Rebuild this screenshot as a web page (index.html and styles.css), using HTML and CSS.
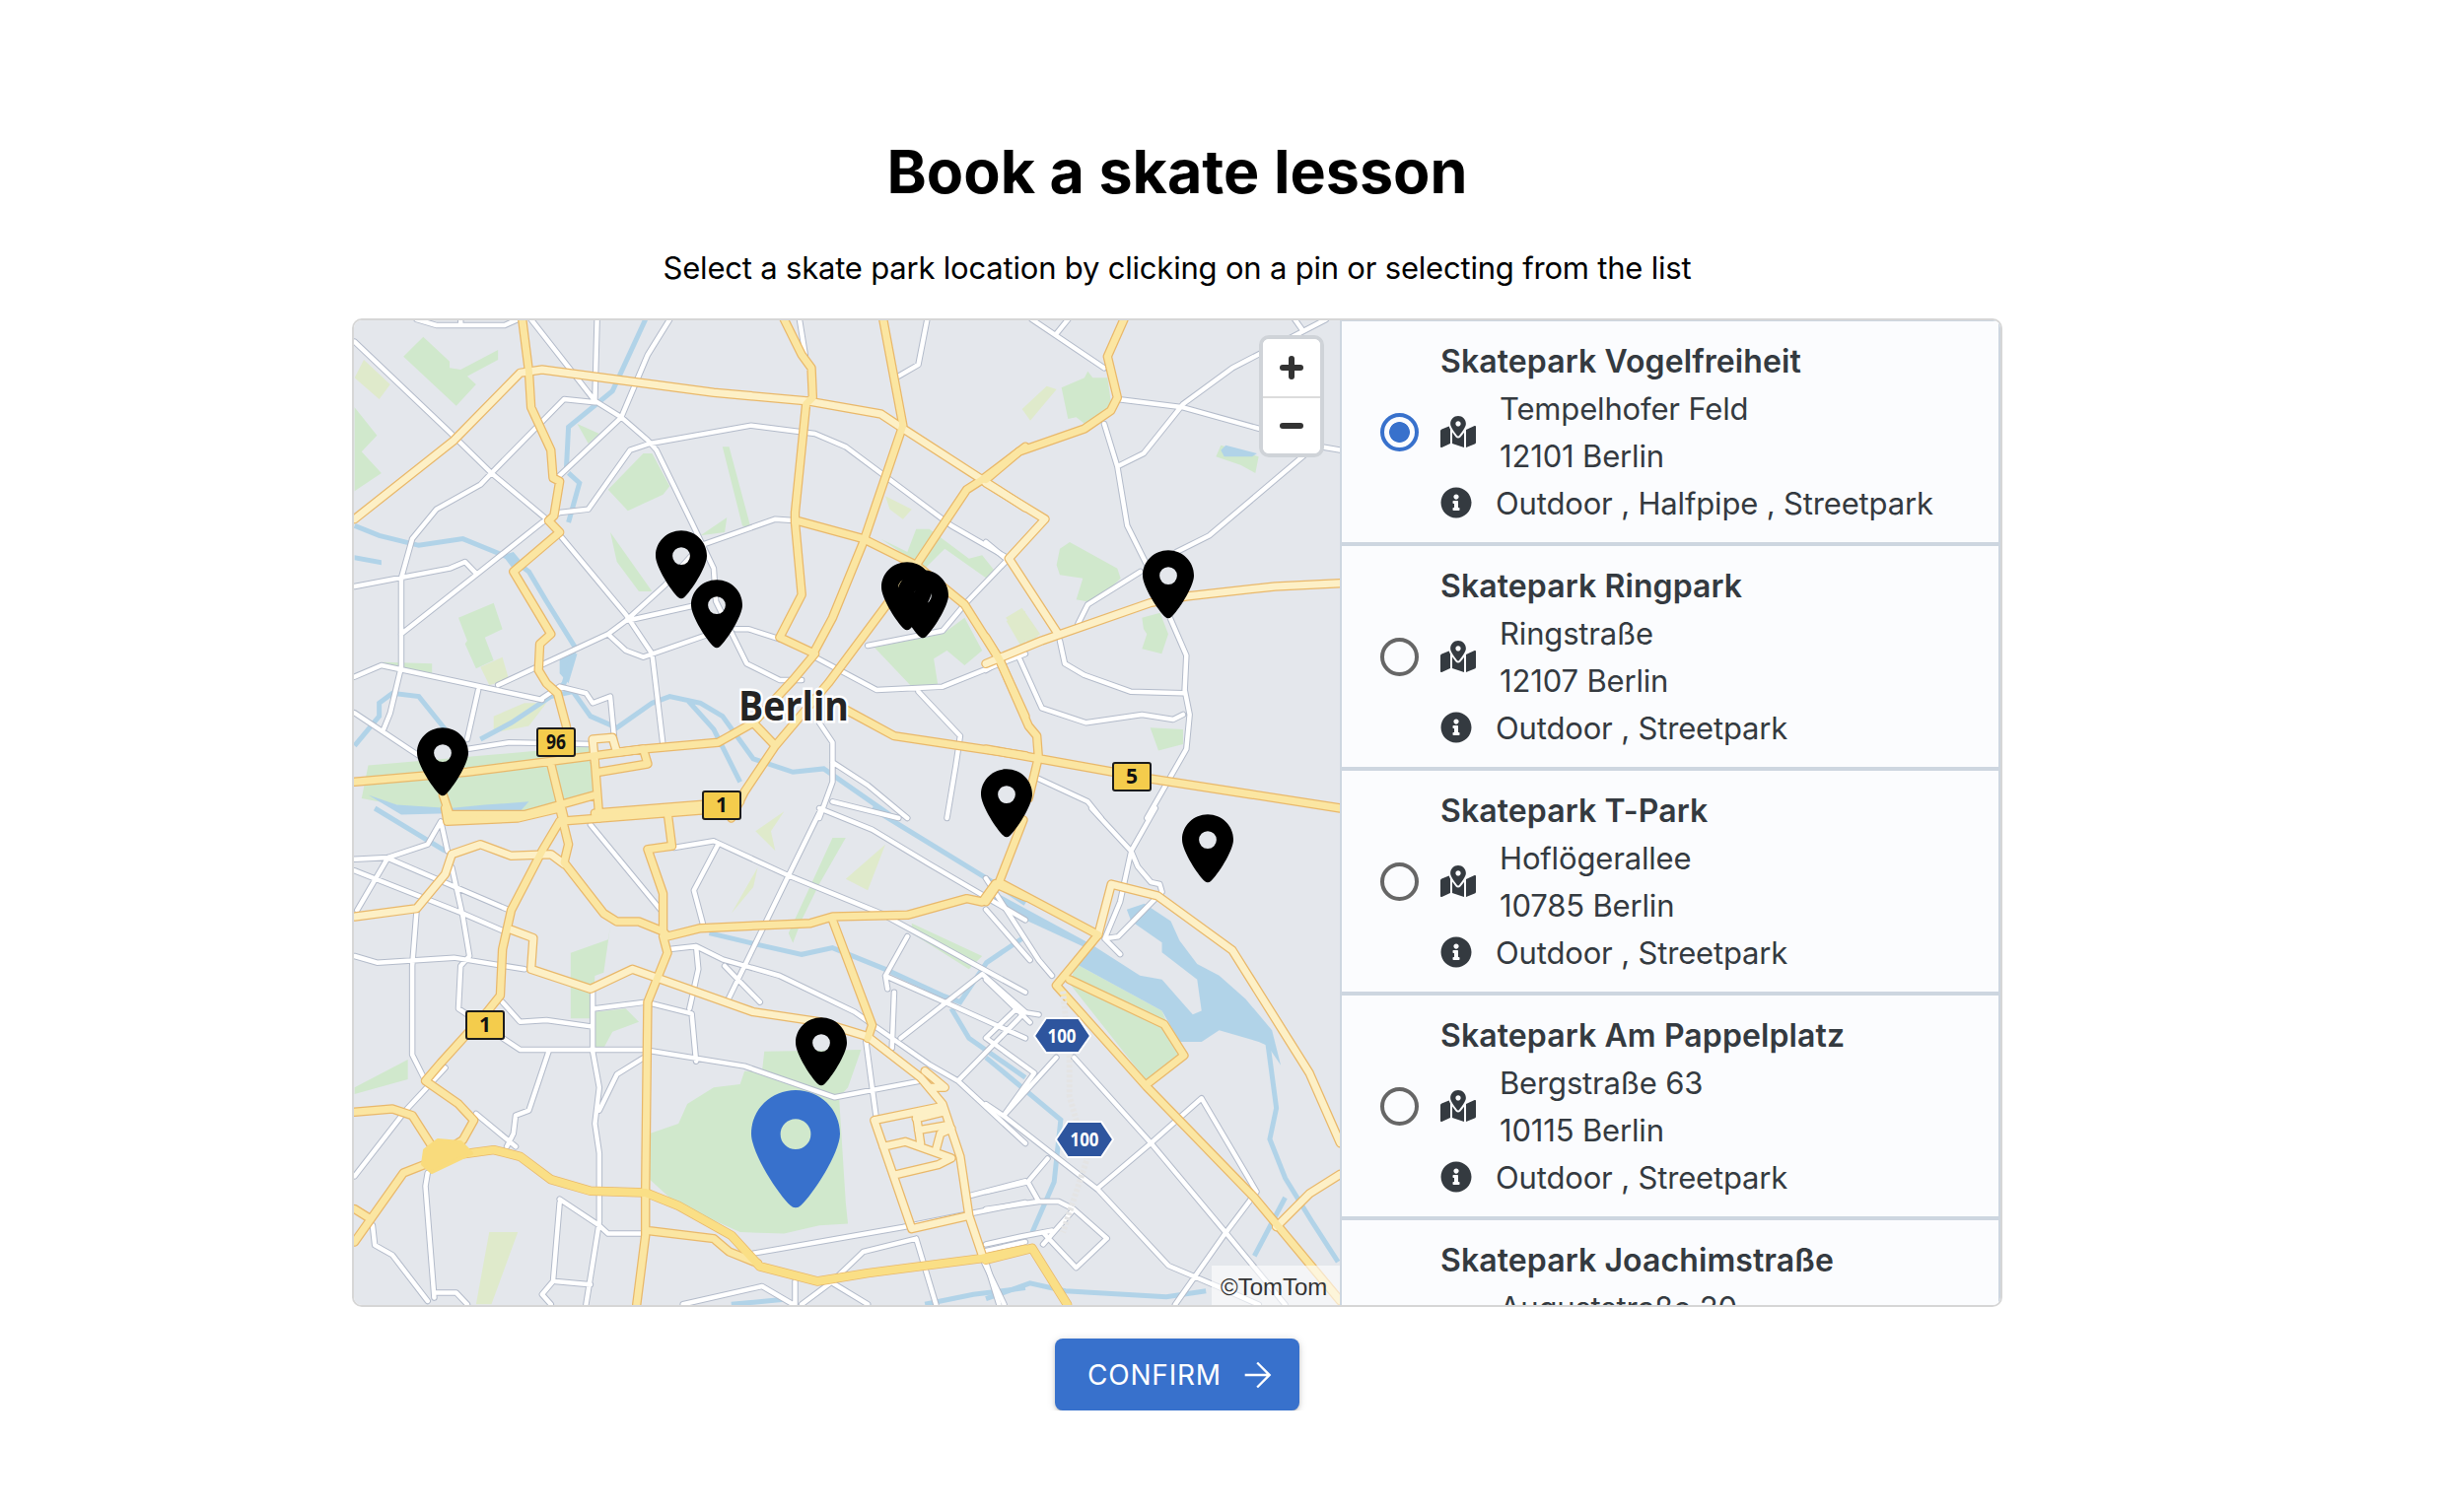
FILE: index.html
```html
<!DOCTYPE html>
<html lang="en">
<head>
  <meta charset="UTF-8">
  <title>Book a skate lesson</title>
  <meta name="viewport" content="width=device-width, initial-scale=1.0">
  <link rel="stylesheet" href="styles.css">
</head>
<body>
<main class="page">
  <h1>Book a skate lesson</h1>
  <p class="intro">Select a skate park location by clicking on a pin or selecting from the list</p>

  <section class="picker">
    <div class="map">
      <svg class="map-canvas" viewBox="0 0 1000 999" width="1000" height="999">
        <defs>
          <symbol id="pin" viewBox="0 0 24 32">
            <path fill-rule="evenodd" d="M12 0C5.4 0 0 5.2 0 11.8 0 17 7.5 28.5 10.6 31.2a1.9 1.9 0 0 0 2.8 0C16.5 28.5 24 17 24 11.8 24 5.2 18.6 0 12 0ZM12 7.8a4.1 4.1 0 1 0 0 8.2 4.1 4.1 0 0 0 0-8.2Z"/>
          </symbol>

          <g id="minor-roads">
            <g transform="translate(-19 -15) scale(.4464 .3333)">
              <path d="M44 110L260 385 355 510 480 650 660 940 720 1060 745 1340M185 42L230 60 385 60 415 42M285 42V55M445 42L590 290 650 340 710 410 730 440 810 660 860 800 865 900 935 1090 1010 1140 1060 1140M595 42L590 290M760 42L710 150 650 340 500 530M1055 42L1068 150M1345 42L1325 180 1280 215M355 510L520 285 590 295M44 855L260 800 295 780 320 815M150 1000L320 820 470 660 510 630 575 620 670 440 715 420 945 365 1090 390 1160 430 1260 530 1400 670 1530 770 1430 910 1380 990 1210 1035M175 710L230 620 330 545 355 510M175 710L150 830V1100L125 1240 110 1290M44 1130L105 1095 470 1200M44 1240L190 1370M325 1170L300 1320M370 1155L620 1000 660 960 750 850 830 730 1000 650 1050 655M620 1000L660 1050 700 1070 850 1000M660 960L810 915M910 985H940L1010 1015M1090 1070L1230 1170 1380 1160 1510 1090 1568 1060M1325 1175L1420 1310 1410 1400 1390 1560M1100 1270L1130 1330V1450L1100 1560M1130 1390L1210 1460 1300 1560M1130 1510L1280 1560M470 1195L510 1160 570 1180 585 1210 625 1190 635 1330M300 1350L395 1330 580 1335M1530 770L1568 720"/>
            </g>
            <g transform="translate(-19 495) scale(.4464 .3333)">
              <path d="M44 155L120 150 210 110 240 40 255 130M120 150L50 310M125 155L395 310M44 190L290 320 385 375M265 180L290 330 305 450 285 480 280 610 420 735H700L930 785 1135 880 1330 830M185 310L175 480V750L205 830M44 450L95 470 270 455 430 490M380 590L420 650 480 645 585 665M585 550V740L600 850 590 960 600 1050V1260M590 610L705 590 810 625 820 770M860 100L770 120M860 100L1030 205 1240 320 1350 400 1568 560M1105 0L1030 205 890 590M580 50L740 310M870 110L815 250 835 350M820 420L880 460 1010 510 1180 620 1350 780 1415 830 1568 1020M755 430L820 420 825 490 805 610M885 480L965 590M1100 0L1220 65 1350 170 1568 340M1300 390L1250 510 1255 550M1250 510L1410 605 1568 700M1470 505L1568 620M1285 700L1470 505M1415 830L1568 620M1270 560L1265 730M1205 700L1230 950M700 760L640 810 600 920M485 740L440 920 410 935 405 990 390 1030M320 930L410 1030M44 1120L160 920 250 790M210 1110L205 1150 225 1490M510 1200L495 1440 470 1480 490 1510M500 1440L580 1450M600 1260L570 1510M510 1190L600 1270 620 1295H700M85 1270L90 1330 130 1360 210 1500M225 1475H275L300 1510M950 1355L1290 1275 1568 1200M1440 1180L1568 1135M1320 1310L1200 1350 1130 1440 1060 1510M1320 1310L1365 1510M790 1510L970 1455 1040 1510M1045 1440V1510M1130 1445L1210 1510M1470 1350L1568 1320M1470 1370L1520 1510"/>
            </g>
            <g transform="translate(641 -15) scale(.3333)">
              <path d="M140 42L360 190M250 42L215 85M940 42L960 70M1035 42L750 190 600 300 480 450 400 490M400 285L600 310 850 380M1020 430L1078 440M360 360L400 490 430 670 490 790M0 720L60 770M975 450L680 700 580 750M470 810L310 910 280 970M560 950L610 1065 605 1170 620 1245 610 1350 490 1560M225 1020L240 1090 300 1125 440 1175 600 1180M100 1070L170 1225 305 1270 475 1245 570 1260 600 1245M0 1110L40 1085M160 1440L310 1510 350 1560"/>
            </g>
            <g transform="translate(641 495) scale(.4464 .395)">
              <path d="M240 0L330 110 345 150 375 190 395 195 400 215 300 330 270 335 305 375M385 0L330 110 305 240 270 335M0 180L120 390 150 430M0 260L100 390M0 440L100 550M65 520L0 590M0 590L110 680 40 790M120 530L65 520M200 640L375 860 545 1090 680 1275M0 760L40 790 255 980 415 1175 530 1230 620 1275M40 790L160 640M375 860L490 745 615 985 545 1090 430 1275M255 975L375 860M140 900L95 960 0 985M95 960L120 1010 0 1030M120 1010H165L200 1030M200 1030L130 1120M200 1030L275 1105 205 1180 130 1090M0 1120L80 1100 150 1085M0 1165L30 1275"/>
            </g>
          </g>

          <g id="light-roads">
            <g transform="translate(-19 -15) scale(.4464 .3333)">
              <path d="M44 650L270 410 420 205 470 195 860 265 1070 290 1240 330 1285 370 1470 530 1568 615M640 1360L630 1315 585 1320 590 1390M700 1350L640 1360"/>
            </g>
            <g transform="translate(-19 495) scale(.4464 .3333)">
              <path d="M45 330L185 305 250 200 265 140 330 110 400 145 490 140 520 170M400 370L450 395 445 490 580 550 675 490 950 620 1100 650 1210 695 1330 820 1380 900 1420 1060 1440 1240 1470 1360M1340 800L1385 850 1350 850 1330 820M1225 950L1370 910M1225 950L1310 1280 1440 1240M1245 1030L1295 1015 1400 1065 1370 1085 1275 1115M1320 930L1330 1020M1325 980L1390 965M1320 945L1380 925M1365 1040L1375 990 1400 975"/>
            </g>
            <g transform="translate(641 -15) scale(.3333)">
              <path d="M1078 845L880 855 610 885 500 905 170 1020 0 1090M0 540L180 650 70 770 220 1000"/>
            </g>
            <g transform="translate(641 495) scale(.4464 .395)">
              <path d="M285 195L255 325M285 195L390 225 560 365 735 680 805 860M660 1075L735 990 805 940"/>
            </g>
          </g>

          <g id="main-roads">
            <g transform="translate(-19 -15) scale(.4464 .3333)">
              <path d="M425 42L440 200 445 310 490 440 495 525 510 535 497 640 485 655 510 690 405 810 490 1000 465 1030 462 1110 480 1150 505 1180 525 1280 530 1330M1020 42L1060 150 1082 190 1085 280 1070 300 1045 630V660L1060 880 1010 1010 1090 1060 1040 1140M1245 42L1290 365 1200 720 1130 950 1090 1050M1050 655L1200 710 1320 790 1430 910 1510 1080 1568 1250M1568 430L1470 530 1435 560 1320 790 1120 1150 1000 1340 930 1480 900 1560M1160 1230L1270 1310 1568 1370M1040 1140L950 1270 870 1330 700 1350 710 1395 600 1420M700 1350L590 1370 300 1420 44 1450M950 1270L1000 1340M590 1390L600 1560M490 1395L520 1560M590 1490L430 1550 260 1550 245 1490M590 1545L920 1510"/>
            </g>
            <g transform="translate(-19 495) scale(.4464 .3333)">
              <path d="M250 0L255 40 415 30 510 0M510 40L840 5M510 0L530 110 520 165 610 320 640 345H690L745 375 755 390 830 365 1080 350 1130 330 1300 325 1435 275 1470 285 1500 230 1568 270M755 10L765 115 710 125 745 260V375M510 40L470 130 400 310 380 430 375 570 345 620 240 775 205 830 280 900 315 950 290 1010 230 1060M1130 340L1220 660 1210 700M745 390L755 440 710 590 705 1160V1300L685 1510M44 925L130 915 175 935 225 1040 250 1060M250 1060L155 1110 44 1320M44 1220L80 1250M705 1285L860 1310 895 1350 960 1385"/>
            </g>
            <g transform="translate(641 -15) scale(.3333)">
              <path d="M420 42L370 155 400 280 380 320 300 375 100 445 0 530M1078 1530L500 1440 0 1350M0 1010L40 1075 130 1280 155 1310 160 1375 130 1500"/>
            </g>
            <g transform="translate(641 495) scale(.4464 .395)">
              <path d="M85 30L30 190 0 240M30 190L255 325 160 455 365 715 610 1000 805 1265M190 440L405 555 450 635 370 705"/>
            </g>
          </g>

          <g id="ring-road">
            <g transform="translate(-19 495) scale(.4464 .3333)">
              <path d="M250 1060L360 1040 420 1060 490 1130 580 1165 705 1170 780 1210 900 1300 965 1395 1095 1440 1210 1415 1470 1370 1568 1342"/>
            </g>
            <g transform="translate(641 495) scale(.4464 .395)">
              <path d="M0 1160L105 1130 185 1275"/>
            </g>
          </g>
        </defs>

        <g class="park">
          <g transform="translate(-19 -15) scale(.4464 .3333)">
            <path d="M155 155L200 95 260 170V190L285 195 370 135V165L300 215 320 240 275 305ZM44 310L95 395 60 445 105 510 44 565ZM620 560L700 450H720L760 550 745 575 665 625ZM625 690L720 870H690L640 780ZM880 430H895L945 680 925 670ZM830 700L890 645 885 690ZM550 360L600 390 575 420ZM280 950L360 905 380 985 340 1010 360 1080 320 1105 295 1030 300 1020ZM1225 1040L1380 1000 1430 950 1470 1050 1430 1095 1390 1050 1360 1075 1370 1160H1310ZM1240 710L1300 750 1320 680H1350L1440 770 1470 760 1500 810 1480 830 1385 740 1340 800ZM75 1400L590 1340V1500L430 1550H260L60 1500ZM110 1085L220 1090V1125L110 1095Z"/>
          </g>
          <g transform="translate(-19 495) scale(.4464 .3333)">
            <path d="M715 990L780 960 800 900 860 850 920 840 930 800H970L975 740 1195 735 1165 850 1145 880 1150 990 1160 1200 1165 1265 1100 1270 1020 1295 920 1290 870 1260 780 1210 715 1130ZM535 440L620 400 625 360 610 500 590 510 585 640H535ZM590 620L660 610 690 650 630 680 610 730H590ZM44 850L165 765V825L44 870ZM1130 90H1160L1100 230 1060 340 1040 410 1030 380ZM1310 350L1470 450 1440 490 1310 380Z"/>
          </g>
          <g transform="translate(641 -15) scale(.3333)">
            <path d="M230 250L300 220 310 200 325 220H370L380 290 370 320 300 360 275 340 250 345ZM700 460L715 425 830 460 820 510 775 485ZM215 790L225 740 255 720 400 800 410 830 330 905 275 895 295 830 225 820ZM475 950L530 935 555 1000 535 1060 475 1045 490 1000 480 985ZM500 1285L600 1290V1335L525 1355Z"/>
          </g>
          <g transform="translate(641 495) scale(.4464 .395)">
            <path d="M190 450L205 400 400 520 440 630 365 700Z"/>
          </g>
        </g>
        <g class="park-light">
          <g transform="translate(-19 -15) scale(.4464 .3333)">
            <path d="M44 220L65 165 125 240 100 285ZM330 1100L380 1070 395 1140 350 1155ZM360 1250L430 1210 480 1210 440 1280 360 1300ZM1250 580L1310 620 1290 650 1260 620ZM1525 960L1568 930V1060Z"/>
          </g>
          <g transform="translate(-19 495) scale(.4464 .3333)">
            <path d="M320 1510L350 1290H415L355 1510ZM955 70L1020 10 990 70 1000 130ZM900 320L960 180 950 240ZM1160 215L1250 110 1210 250Z"/>
          </g>
          <g transform="translate(641 -15) scale(.3333)">
            <path d="M110 315L185 245 215 255 135 350ZM60 950L110 920 165 1000 130 1030Z"/>
          </g>
        </g>
        <g class="water">
          <g transform="translate(-19 -15) scale(.4464 .3333)">
            <path d="M510 1060H550L530 1150 510 1120ZM380 760L405 750 430 790 400 795ZM44 760L105 775V790L44 775ZM75 1490L140 1520 260 1530 340 1520 440 1510 420 1540 150 1550Z"/>
          </g>
          <g transform="translate(641 -15) scale(.3333)">
            <path d="M715 440L730 425 825 450 810 460 725 460Z"/>
          </g>
          <g transform="translate(641 495) scale(.4464 .395)">
            <path d="M0 215H20L240 350 350 430 400 440 470 530 490 520 480 440 400 370V345L330 290 320 260 360 245 420 290 440 340 480 400 530 430 590 490 650 570 670 660 640 610 620 600 530 570 490 600H440L400 520 205 400 240 365 0 240Z"/>
          </g>
        </g>
        <g class="river">
          <g transform="translate(-19 -15) scale(.4464 .3333)">
            <path d="M44 670L100 700 190 730 290 710 400 770 440 810 480 900 545 1040 520 1150 490 1190 400 1270 330 1320M44 1340L100 1250V1210L130 1180 190 1190 250 1290M490 1190L540 1175 580 1250 640 1285 720 1210 760 1190 830 1210 880 1250 950 1380 1040 1420 1110 1410 1260 1550M800 1200L860 1290 920 1450M530 510L555 540 530 660M705 42L630 260 530 370 525 500"/>
          </g>
          <g transform="translate(-19 495) scale(.4464 .3333)">
            <path d="M90 0L250 130M1220 0L1500 230 1568 290M850 380L960 415 1060 445 1130 425 1250 490 1380 570 1420 590 1480 470 1568 390M1400 610L1440 700 1568 820M900 1510L1020 1495M1340 1510L1450 1480 1568 1460"/>
          </g>
          <g transform="translate(641 495) scale(.4464 .395)">
            <path d="M640 600L660 770 645 850 680 950 740 1060 800 1165M0 1260L100 1220 180 1240 410 1255 500 1240M0 640L170 800 155 960 105 1090M680 1000L610 1150"/>
          </g>
        </g>

        <use href="#minor-roads" class="road-casing-minor"/>
        <use href="#minor-roads" class="road-minor"/>
        <use href="#light-roads" class="road-casing"/>
        <use href="#main-roads" class="road-casing"/>
        <use href="#ring-road" class="road-casing"/>
        <use href="#light-roads" class="road-light"/>
        <use href="#main-roads" class="road-main"/>
        <use href="#ring-road" class="road-ring"/>
        <path class="junction" d="M72 842L85 832 108 834 119 845 79 864 70 856Z"/>

        <g class="tunnel">
          <g transform="translate(641 495) scale(.4464 .395)">
            <path d="M175 470L190 640V740L230 900 175 1090"/>
          </g>
        </g>

        <text class="city" x="390" y="406" textLength="112" lengthAdjust="spacingAndGlyphs">Berlin</text>

        <g class="shield">
          <rect x="186" y="414" width="38" height="28" rx="2"/><text x="205" y="435" textLength="20" lengthAdjust="spacingAndGlyphs">96</text>
          <rect x="354" y="478" width="38" height="28" rx="2"/><text x="373" y="499">1</text>
          <rect x="114" y="701" width="38" height="28" rx="2"/><text x="133" y="722">1</text>
          <rect x="770" y="449" width="38" height="28" rx="2"/><text x="789" y="470">5</text>
        </g>
        <g class="shield-blue">
          <path d="M702 708H735L747 726 735 743H702L690 726Z"/><text x="718" y="733" textLength="29" lengthAdjust="spacingAndGlyphs">100</text>
          <path d="M724 813H758L770 831 758 849H724L712 831Z"/><text x="741" y="838" textLength="29" lengthAdjust="spacingAndGlyphs">100</text>
        </g>

        <g class="pin">
          <use href="#pin" x="306" y="213" width="52" height="70"/>
          <use href="#pin" x="342" y="263" width="52" height="70"/>
          <use href="#pin" x="64" y="413" width="52" height="70"/>
          <use href="#pin" x="535" y="245" width="52" height="70"/>
          <use href="#pin" x="551" y="253" width="52" height="70"/>
          <use href="#pin" x="800" y="233" width="52" height="70"/>
          <use href="#pin" x="636" y="455" width="52" height="70"/>
          <use href="#pin" x="840" y="501" width="52" height="70"/>
          <use href="#pin" x="448" y="707" width="52" height="70"/>
        </g>
        <use href="#pin" class="pin-active" x="403" y="781" width="90" height="120"/>
      </svg>

      <div class="zoom-ctrl">
        <button type="button" class="zoom-btn" aria-label="Zoom in"><span class="zoom-plus"></span></button>
        <button type="button" class="zoom-btn" aria-label="Zoom out"><span class="zoom-minus"></span></button>
      </div>
      <div class="attribution">©TomTom</div>
    </div>

    <div class="park-list">
      <label class="park-item">
        <span class="radio radio-checked"></span>
        <div class="park-info">
          <div class="park-name">Skatepark Vogelfreiheit</div>
          <div class="park-row">
            <svg class="icon-map" viewBox="0 0 576 512"><use href="#icon-map"/></svg>
            <div class="park-address">Tempelhofer Feld<br>12101 Berlin</div>
          </div>
          <div class="park-row">
            <svg class="icon-info" viewBox="0 0 512 512"><use href="#icon-info"/></svg>
            <div>Outdoor , Halfpipe , Streetpark</div>
          </div>
        </div>
      </label>
      <label class="park-item">
        <span class="radio"></span>
        <div class="park-info">
          <div class="park-name">Skatepark Ringpark</div>
          <div class="park-row">
            <svg class="icon-map" viewBox="0 0 576 512"><use href="#icon-map"/></svg>
            <div class="park-address">Ringstraße<br>12107 Berlin</div>
          </div>
          <div class="park-row">
            <svg class="icon-info" viewBox="0 0 512 512"><use href="#icon-info"/></svg>
            <div>Outdoor , Streetpark</div>
          </div>
        </div>
      </label>
      <label class="park-item">
        <span class="radio"></span>
        <div class="park-info">
          <div class="park-name">Skatepark T-Park</div>
          <div class="park-row">
            <svg class="icon-map" viewBox="0 0 576 512"><use href="#icon-map"/></svg>
            <div class="park-address">Hoflögerallee<br>10785 Berlin</div>
          </div>
          <div class="park-row">
            <svg class="icon-info" viewBox="0 0 512 512"><use href="#icon-info"/></svg>
            <div>Outdoor , Streetpark</div>
          </div>
        </div>
      </label>
      <label class="park-item">
        <span class="radio"></span>
        <div class="park-info">
          <div class="park-name">Skatepark Am Pappelplatz</div>
          <div class="park-row">
            <svg class="icon-map" viewBox="0 0 576 512"><use href="#icon-map"/></svg>
            <div class="park-address">Bergstraße 63<br>10115 Berlin</div>
          </div>
          <div class="park-row">
            <svg class="icon-info" viewBox="0 0 512 512"><use href="#icon-info"/></svg>
            <div>Outdoor , Streetpark</div>
          </div>
        </div>
      </label>
      <label class="park-item">
        <span class="radio"></span>
        <div class="park-info">
          <div class="park-name">Skatepark Joachimstraße</div>
          <div class="park-row">
            <svg class="icon-map" viewBox="0 0 576 512"><use href="#icon-map"/></svg>
            <div class="park-address">Auguststraße 20<br>10117 Berlin</div>
          </div>
          <div class="park-row">
            <svg class="icon-info" viewBox="0 0 512 512"><use href="#icon-info"/></svg>
            <div>Outdoor , Streetpark</div>
          </div>
        </div>
      </label>
    </div>
  </section>

  <div class="actions">
    <button type="button" class="confirm">
      CONFIRM
      <svg class="confirm-arrow" viewBox="0 0 24 24"><path d="M12 4l-1 1 6.2 6.3H4v1.4h13.2L11 19l1 1 8-8z"/></svg>
    </button>
  </div>
</main>

<svg class="icon-defs" width="0" height="0">
  <defs>
    <path id="icon-map" d="M288 0c-69.59 0-126 56.41-126 126 0 56.26 82.35 158.8 113.9 196.02 6.39 7.54 17.82 7.54 24.2 0C331.65 284.8 414 182.26 414 126 414 56.41 357.59 0 288 0zm0 168c-23.2 0-42-18.8-42-42s18.8-42 42-42 42 18.8 42 42-18.8 42-42 42zM20.12 215.95A32.006 32.006 0 0 0 0 245.66v250.32c0 11.32 11.43 19.06 21.94 14.86L160 448V214.92c-8.84-15.98-16.07-31.54-21.25-46.42L20.12 215.95zM288 359.67c-14.07 0-27.38-6.18-36.51-16.96-19.66-23.2-40.57-49.62-59.49-76.72V448l192 64V266c-18.92 27.09-39.82 53.52-59.49 76.72-9.13 10.77-22.44 16.95-36.51 16.95zm266.06-198.51L416 224v288l139.88-55.95A31.996 31.996 0 0 0 576 426.34V176.02c0-11.32-11.43-19.06-21.94-14.86z"/>
    <path id="icon-info" d="M256 8C119.043 8 8 119.083 8 256c0 136.997 111.043 248 248 248s248-111.003 248-248C504 119.083 392.957 8 256 8zm0 110c23.196 0 42 18.804 42 42s-18.804 42-42 42-42-18.804-42-42 18.804-42 42-42zm56 254c0 6.627-5.373 12-12 12h-88c-6.627 0-12-5.373-12-12v-24c0-6.627 5.373-12 12-12h12v-64h-12c-6.627 0-12-5.373-12-12v-24c0-6.627 5.373-12 12-12h64c6.627 0 12 5.373 12 12v100h12c6.627 0 12 5.373 12 12v24z"/>
  </defs>
</svg>
</body>
</html>
```

FILE: styles.css
```css
* {
  box-sizing: border-box;
}

body {
  margin: 0;
  background: #fff;
  color: #000;
  font-family: Inter, "Liberation Sans", sans-serif;
}

.page {
  width: 1674px;
  margin-left: 357px;
  padding-top: 140px;
}

h1 {
  margin: 0 0 40px;
  font-size: 61px;
  line-height: 68px;
  font-weight: 700;
  text-align: center;
}

.intro {
  margin: 0 0 27px;
  font-size: 31px;
  line-height: 48px;
  letter-spacing: -0.2px;
  text-align: center;
}

.picker {
  display: flex;
  height: 1003px;
  border: 2px solid #d6d6d6;
  border-radius: 10px;
  overflow: hidden;
}

/* map */
.map {
  position: relative;
  flex: none;
  width: 1000px;
  height: 999px;
  background: #e4e7ec;
}

.map-canvas {
  display: block;
}

.map-canvas path {
  vector-effect: non-scaling-stroke;
}

.park path {
  fill: #d0e8cc;
}

.park-light path {
  fill: #dfeacb;
}

.water path {
  fill: #b1d3e8;
}

.river path {
  fill: none;
  stroke: #b1d3e8;
  stroke-width: 5;
}

.road-casing-minor,
.road-minor,
.road-casing,
.road-light,
.road-main,
.road-ring {
  fill: none;
  stroke-linejoin: round;
  stroke-linecap: round;
}

.road-casing-minor {
  stroke: #b3bbca;
  stroke-width: 6.5;
}

.road-minor {
  stroke: #fff;
  stroke-width: 4.5;
}

.road-casing {
  stroke: #e9b86a;
  stroke-width: 9.5;
}

.road-light {
  stroke: #fdf0c6;
  stroke-width: 7;
}

.road-main {
  stroke: #fbe6a2;
  stroke-width: 7;
}

.road-ring {
  stroke: #fadf86;
  stroke-width: 8;
}

.junction {
  fill: #f9db7c;
  stroke: #f9db7c;
  stroke-width: 4;
  stroke-linejoin: round;
}

.tunnel path {
  fill: none;
  stroke: #e4e4e4;
  stroke-width: 6;
  stroke-dasharray: 3 2;
}

.city {
  font-family: "Open Sans", sans-serif;
  font-weight: 700;
  font-size: 42px;
  fill: #242424;
  stroke: #fff;
  stroke-width: 5;
  paint-order: stroke;
}

.shield rect {
  fill: #f4cc4c;
  stroke: #1c1c1c;
  stroke-width: 2;
}

.shield text {
  font-family: "Open Sans", sans-serif;
  font-weight: 700;
  font-size: 21px;
  text-anchor: middle;
  fill: #111;
}

.shield-blue path {
  fill: #2e559e;
  stroke: #fff;
  stroke-width: 2;
}

.shield-blue text {
  font-family: "Open Sans", sans-serif;
  font-weight: 700;
  font-size: 20px;
  text-anchor: middle;
  fill: #fff;
}

.pin {
  fill: #000;
}

.pin-active {
  fill: #3871cc;
}

.zoom-ctrl {
  position: absolute;
  top: 15px;
  right: 16px;
  width: 66px;
  border: 4px solid #cfd3d8;
  border-radius: 10px;
  overflow: hidden;
  background: #fff;
}

.zoom-btn {
  display: flex;
  align-items: center;
  justify-content: center;
  width: 100%;
  height: 58px;
  padding: 0;
  border: 0;
  background: #fff;
}

.zoom-btn + .zoom-btn {
  border-top: 2px solid #dcdcdc;
}

.zoom-plus,
.zoom-minus {
  position: relative;
  display: block;
  width: 24px;
  height: 6px;
  border-radius: 3px;
  background: #333;
}

.zoom-plus::after {
  content: "";
  position: absolute;
  top: -9px;
  left: 9px;
  width: 6px;
  height: 24px;
  border-radius: 3px;
  background: #333;
}

.attribution {
  position: absolute;
  right: 0;
  bottom: 0;
  width: 130px;
  height: 40px;
  padding: 8px 0 0 9px;
  background: rgba(255, 255, 255, 0.6);
  color: #333;
  font-family: "Liberation Sans", sans-serif;
  font-size: 24px;
  line-height: 28px;
}

/* list */
.park-list {
  flex: 1;
  min-width: 0;
  border-left: 2px solid #cdd6e0;
  border-right: 2px solid #cdd6e0;
  border-top: 1px solid #cdd6e0;
  overflow: hidden;
  background: #fbfcfe;
}

.park-item {
  display: flex;
  align-items: center;
  gap: 22px;
  height: 228px;
  padding: 16px 0 16px 39px;
  border-bottom: 4px solid #cdd6e0;
  color: #343a40;
  font-size: 31px;
  line-height: 48px;
  letter-spacing: -0.16px;
}

.radio {
  flex: none;
  width: 39px;
  height: 39px;
  border: 4px solid #666;
  border-radius: 50%;
}

.radio-checked {
  border-color: #3871cc;
  background: radial-gradient(circle, #3871cc 10px, transparent 10.8px);
}

/* text sits a touch lower than the icons */
.park-info {
  flex: none;
  padding-top: 2px;
}

.park-name {
  font-size: 32px;
  font-weight: 600;
  letter-spacing: 0.1px;
}

.park-row {
  display: flex;
  align-items: center;
  gap: 24px;
}

.icon-map {
  flex: none;
  width: 36px;
  height: 32px;
  margin-bottom: 2px;
  fill: #343a40;
}

.icon-info {
  flex: none;
  width: 32px;
  height: 32px;
  margin-bottom: 2px;
  fill: #343a40;
}

.icon-defs {
  position: absolute;
}

/* confirm */
.actions {
  display: flex;
  justify-content: center;
  margin-top: 32px;
}

.confirm {
  display: flex;
  align-items: center;
  gap: 17px;
  width: 248px;
  height: 73px;
  padding: 0 0 0 33px;
  border: 0;
  border-radius: 8px;
  background: #3871cc;
  color: #fff;
  font-family: Inter, sans-serif;
  font-size: 28px;
  letter-spacing: 0.8px;
  box-shadow: 0 3px 2px -2px rgba(0, 0, 0, 0.2), 0 2px 4px 0 rgba(0, 0, 0, 0.14), 0 1px 10px 0 rgba(0, 0, 0, 0.12);
}

.confirm-arrow {
  flex: none;
  width: 40px;
  height: 40px;
  fill: #fff;
}
```
